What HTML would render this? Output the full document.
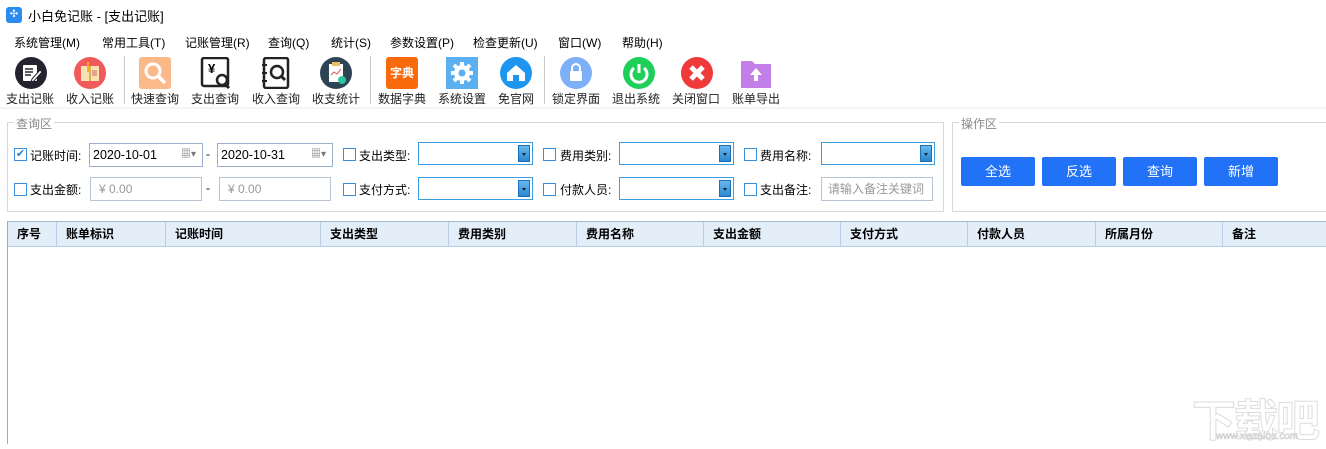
<!DOCTYPE html>
<html><head><meta charset="utf-8"><style>
*{margin:0;padding:0;box-sizing:border-box}
body{width:1326px;height:444px;background:#fff;font-family:"Liberation Sans","Noto Sans CJK SC",sans-serif;font-size:12px;color:#000;position:relative;overflow:hidden}
.a{position:absolute;white-space:nowrap}
.menu{font-size:12px;top:34px}
.lbl{font-size:12px;top:90px;color:#222}
.ic{position:absolute;top:57px;width:32px;height:32px}
.sep{position:absolute;top:56px;width:1px;height:48px;background:#c8c8c8}
.grp{position:absolute;border:1px solid #d8d8d8}
.gt{position:absolute;top:-8px;left:6px;background:#fff;padding:0 2px;color:#888;font-size:12px}
.cb{position:absolute;width:13px;height:13px;border:1px solid #3a8fd8;background:#fff}
.combo{position:absolute;border:1px solid #3a9ee0;background:#fff;height:23px}
.combo i{position:absolute;right:2px;top:2px;width:12px;height:17px;background:linear-gradient(#6ab8ec,#2a88d0);border:1px solid #1a70b8}
.combo i:after{content:"";position:absolute;left:3px;top:7px;border-left:2.5px solid transparent;border-right:2.5px solid transparent;border-top:3px solid #123}
.tb{position:absolute;border:1px solid #b8c4d4;background:#fff;height:24px;color:#999;padding-left:8px;line-height:22px}
.btn{position:absolute;top:157px;width:74px;height:29px;background:#2272f8;color:#fff;border-radius:2px;text-align:center;line-height:29px;font-size:13px}
.th{position:absolute;top:222px;height:25px;line-height:25px;font-weight:bold;font-size:12px;padding-left:9px;border-right:1px solid #b8cde6}
</style></head><body>
<div class="a" style="left:6px;top:7px;width:16px;height:16px;background:#2a8cf0;border-radius:3px;color:#fff;font-size:10px;text-align:center;line-height:16px">✣</div>
<div class="a" style="left:28px;top:6px;font-size:13px">小白免记账 - [支出记账]</div>
<div class="a menu" style="left:14px">系统管理(M)</div>
<div class="a menu" style="left:102px">常用工具(T)</div>
<div class="a menu" style="left:185px">记账管理(R)</div>
<div class="a menu" style="left:268px">查询(Q)</div>
<div class="a menu" style="left:331px">统计(S)</div>
<div class="a menu" style="left:390px">参数设置(P)</div>
<div class="a menu" style="left:473px">检查更新(U)</div>
<div class="a menu" style="left:558px">窗口(W)</div>
<div class="a menu" style="left:622px">帮助(H)</div>

<svg class="ic" style="left:15px" viewBox="0 0 32 32"><circle cx="16" cy="16" r="16" fill="#23232f"/><rect x="8" y="8" width="14" height="16" fill="#fff" rx="1"/><path d="M10 12h8M10 15h8M10 18h6" stroke="#23232f" stroke-width="1.6"/><path d="M17 22l8-9 2 2-8 9-3 1z" fill="#fff" stroke="#23232f"/></svg>
<svg class="ic" style="left:74px" viewBox="0 0 32 32"><circle cx="16" cy="16" r="16" fill="#f05a5a"/><rect x="7" y="9" width="18" height="15" fill="#f6e3b0"/><rect x="15" y="9" width="2" height="15" fill="#d8b060"/><rect x="13" y="5" width="2" height="10" fill="#f0b020"/><rect x="18" y="13" width="5" height="6" fill="#e8a090"/></svg>
<div class="sep" style="left:124px"></div>
<svg class="ic" style="left:139px" viewBox="0 0 32 32"><rect width="32" height="32" rx="3" fill="#fbb98a"/><circle cx="14" cy="14" r="7" fill="none" stroke="#fff" stroke-width="3"/><path d="M19 19l7 7" stroke="#fff" stroke-width="3.5"/></svg>
<svg class="ic" style="left:200px" viewBox="0 0 32 32"><rect x="2" y="1" width="26" height="28" rx="2" fill="#fff" stroke="#222" stroke-width="2.5"/><text x="8" y="16" font-size="13" font-weight="bold" font-family="Liberation Sans">¥</text><circle cx="22" cy="23" r="5" fill="#fff" stroke="#222" stroke-width="2.5"/><path d="M25 27l4 4" stroke="#222" stroke-width="3"/></svg>
<svg class="ic" style="left:260px" viewBox="0 0 32 32"><rect x="4" y="1" width="24" height="30" rx="2" fill="#fff" stroke="#222" stroke-width="2.5"/><path d="M2 8h5M2 16h5M2 24h5" stroke="#222" stroke-width="2"/><circle cx="17" cy="15" r="6" fill="none" stroke="#222" stroke-width="2.5"/><path d="M21 19l4 4" stroke="#222" stroke-width="3"/></svg>
<svg class="ic" style="left:320px" viewBox="0 0 32 32"><circle cx="16" cy="16" r="16" fill="#2d4455"/><rect x="9" y="7" width="14" height="18" fill="#fff"/><rect x="12" y="5" width="8" height="4" fill="#e8c060"/><path d="M11 18l3-3 3 2 4-5" stroke="#e05050" fill="none"/><circle cx="22" cy="23" r="4" fill="#2ec4a0"/></svg>
<div class="sep" style="left:370px"></div>
<div class="ic" style="left:386px;background:#f86a0c;border-radius:3px;color:#fff;font-size:12px;font-weight:bold;text-align:center;line-height:32px">字典</div>
<svg class="ic" style="left:446px" viewBox="0 0 32 32"><rect width="32" height="32" fill="#5ab0f0"/><circle cx="16" cy="16" r="8" fill="#fff"/><path d="M16 5v22M5 16h22M8 8l16 16M24 8L8 24" stroke="#fff" stroke-width="4"/><circle cx="16" cy="16" r="3.5" fill="#5ab0f0"/></svg>
<svg class="ic" style="left:500px" viewBox="0 0 32 32"><circle cx="16" cy="16" r="16" fill="#1e96f0"/><path d="M7 16l9-8 9 8v8H7z" fill="#fff"/><rect x="13" y="18" width="6" height="6" fill="#1e96f0"/></svg>
<div class="sep" style="left:544px"></div>
<svg class="ic" style="left:560px" viewBox="0 0 32 32"><circle cx="16" cy="16" r="16" fill="#7eb0f8"/><rect x="10" y="14" width="12" height="10" rx="1" fill="#fff"/><path d="M12 14v-3a4 4 0 0 1 8 0v3" fill="none" stroke="#fff" stroke-width="2"/></svg>
<svg class="ic" style="left:623px" viewBox="0 0 32 32"><circle cx="16" cy="16" r="16" fill="#1ed05a"/><path d="M11 11a8 8 0 1 0 10 0" fill="none" stroke="#fff" stroke-width="3"/><path d="M16 7v9" stroke="#fff" stroke-width="3"/></svg>
<svg class="ic" style="left:681px" viewBox="0 0 32 32"><circle cx="16" cy="16" r="16" fill="#f03a3a"/><path d="M10 10l12 12M22 10L10 22" stroke="#fff" stroke-width="5"/></svg>
<svg class="ic" style="left:740px" viewBox="0 0 32 32"><path d="M1 4h11l3 3h16v24H1z" fill="#c47ee8"/><path d="M16 11l-6 7h4v6h4v-6h4z" fill="#fff"/></svg>

<div class="a lbl" style="left:6px">支出记账</div>
<div class="a lbl" style="left:66px">收入记账</div>
<div class="a lbl" style="left:131px">快速查询</div>
<div class="a lbl" style="left:191px">支出查询</div>
<div class="a lbl" style="left:252px">收入查询</div>
<div class="a lbl" style="left:312px">收支统计</div>
<div class="a lbl" style="left:378px">数据字典</div>
<div class="a lbl" style="left:438px">系统设置</div>
<div class="a lbl" style="left:498px">免官网</div>
<div class="a lbl" style="left:552px">锁定界面</div>
<div class="a lbl" style="left:612px">退出系统</div>
<div class="a lbl" style="left:672px">关闭窗口</div>
<div class="a lbl" style="left:732px">账单导出</div>
<div class="a" style="left:0;top:107px;width:1326px;height:2px;background:#f2f4f8"></div>

<div class="grp" style="left:7px;top:122px;width:937px;height:90px"><div class="gt">查询区</div></div>
<div class="grp" style="left:952px;top:122px;width:380px;height:90px"><div class="gt">操作区</div></div>

<div class="cb" style="left:14px;top:148px;color:#2a80d0;font-size:11px;line-height:11px;text-align:center">✔</div>
<div class="a" style="left:30px;top:147px">记账时间:</div>
<div class="tb" style="left:89px;top:143px;width:114px;color:#000;padding-left:3px;border-color:#9ab0cc;font-size:12.5px">2020-10-01<span style="position:absolute;right:6px;color:#777;font-size:10px">▦▾</span></div>
<div class="a" style="left:206px;top:147px">-</div>
<div class="tb" style="left:217px;top:143px;width:116px;color:#000;padding-left:3px;border-color:#9ab0cc;font-size:12.5px">2020-10-31<span style="position:absolute;right:6px;color:#777;font-size:10px">▦▾</span></div>
<div class="cb" style="left:14px;top:183px"></div>
<div class="a" style="left:30px;top:181px">支出金额:</div>
<div class="tb" style="left:90px;top:177px;width:112px">¥ 0.00</div>
<div class="a" style="left:206px;top:181px">-</div>
<div class="tb" style="left:219px;top:177px;width:112px">¥ 0.00</div>

<div class="cb" style="left:343px;top:148px"></div><div class="a" style="left:359px;top:147px">支出类型:</div>
<div class="combo" style="left:418px;top:142px;width:115px"><i></i></div>
<div class="cb" style="left:343px;top:183px"></div><div class="a" style="left:359px;top:181px">支付方式:</div>
<div class="combo" style="left:418px;top:177px;width:115px"><i></i></div>

<div class="cb" style="left:543px;top:148px"></div><div class="a" style="left:560px;top:147px">费用类别:</div>
<div class="combo" style="left:619px;top:142px;width:115px"><i></i></div>
<div class="cb" style="left:543px;top:183px"></div><div class="a" style="left:560px;top:181px">付款人员:</div>
<div class="combo" style="left:619px;top:177px;width:115px"><i></i></div>

<div class="cb" style="left:744px;top:148px"></div><div class="a" style="left:760px;top:147px">费用名称:</div>
<div class="combo" style="left:821px;top:142px;width:114px"><i></i></div>
<div class="cb" style="left:744px;top:183px"></div><div class="a" style="left:760px;top:181px">支出备注:</div>
<div class="tb" style="left:821px;top:177px;width:112px;padding-left:6px">请输入备注关键词</div>

<div class="btn" style="left:961px">全选</div>
<div class="btn" style="left:1042px">反选</div>
<div class="btn" style="left:1123px">查询</div>
<div class="btn" style="left:1204px">新增</div>

<div class="a" style="left:7px;top:221px;width:1319px;height:223px;border-left:1px solid #a8a8a8;border-top:1px solid #a8b8cc"></div>
<div class="a" style="left:8px;top:222px;width:1318px;height:25px;background:#e3eef9;border-bottom:1px solid #b8cde6"></div>
<div class="th" style="left:8px;width:49px">序号</div>
<div class="th" style="left:57px;width:109px">账单标识</div>
<div class="th" style="left:166px;width:155px">记账时间</div>
<div class="th" style="left:321px;width:128px">支出类型</div>
<div class="th" style="left:449px;width:128px">费用类别</div>
<div class="th" style="left:577px;width:127px">费用名称</div>
<div class="th" style="left:704px;width:137px">支出金额</div>
<div class="th" style="left:841px;width:127px">支付方式</div>
<div class="th" style="left:968px;width:128px">付款人员</div>
<div class="th" style="left:1096px;width:127px">所属月份</div>
<div class="th" style="left:1223px;width:103px;border:0">备注</div>

<div class="a" style="left:1192px;top:385px;font-size:44px;font-weight:bold;color:#fff;-webkit-text-stroke:1px #ddd;letter-spacing:-2px">下载吧</div>
<div class="a" style="left:1216px;top:431px;font-size:10px;color:#fff;-webkit-text-stroke:0.6px #ccc">www.xiazaiba.com</div>
</body></html>
